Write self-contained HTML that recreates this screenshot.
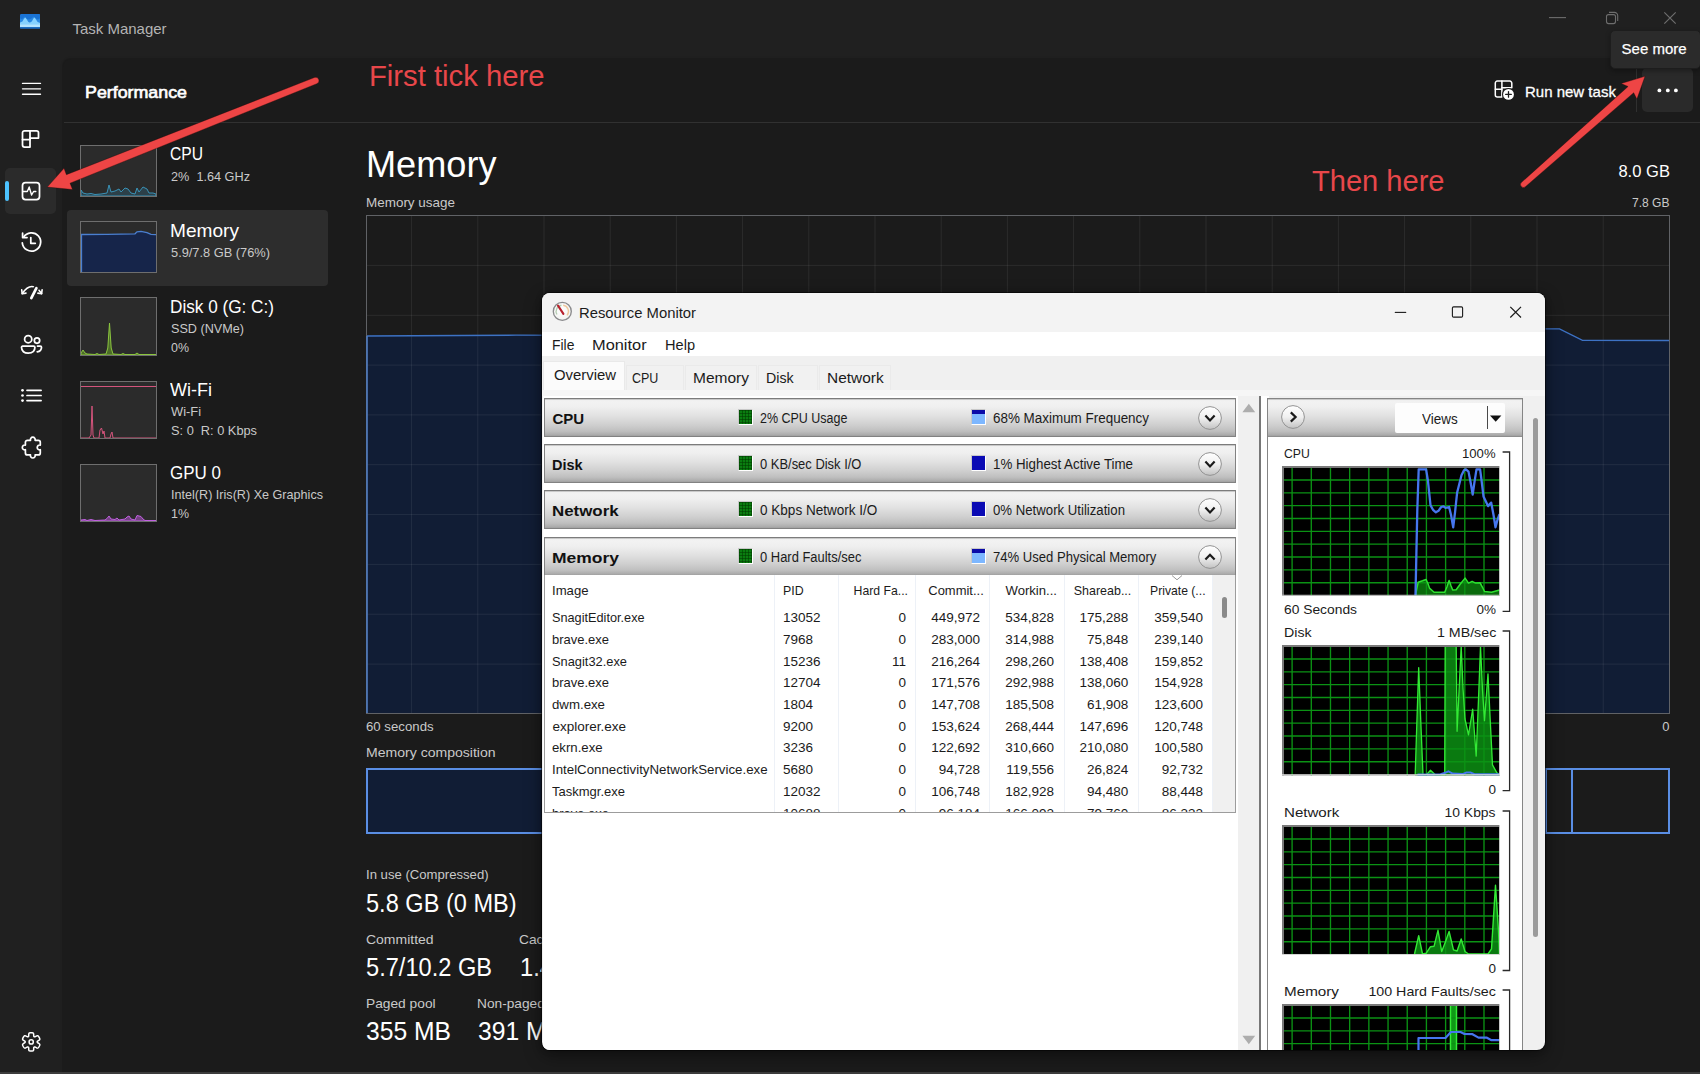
<!DOCTYPE html>
<html lang="en"><head><meta charset="utf-8"><title>Task Manager</title>
<style>
*{box-sizing:border-box;margin:0;padding:0}
html,body{width:1700px;height:1074px;overflow:hidden;background:#202020}
body{position:relative;font-family:"Liberation Sans",sans-serif;-webkit-font-smoothing:antialiased}
body div, body span.t, body svg{position:absolute}
.t{line-height:1;white-space:nowrap;display:inline-block}

</style></head>
<body>
<div style="left:63px;top:58.5px;width:1637px;height:1016px;background:#1b1b1b;border-top-left-radius:8px;box-shadow:-1px -1px 1.5px rgba(0,0,0,.18);"></div>
<div style="left:64px;top:122px;width:1636px;height:1px;background:#313131;"></div>
<div style="left:0px;top:1072px;width:1700px;height:2px;background:#3c3c3c;"></div>
<svg style="left:20px;top:14.3px" width="20.4" height="14.6" viewBox="0 0 20.4 14.6">
<rect x="0" y="0" width="20.4" height="14.6" rx="1.2" fill="#1a73d4"/>
<path d="M0 4.2 L2 5.2 L4.6 2.6 L6.6 4.8 L9 5.6 L11.4 4.4 L13.6 2.4 L15.8 4.6 L18 5.4 L20.4 4 V8 H0Z" fill="#2d8ee6" opacity=".8"/>
<path d="M0 8.6 L2.4 7.6 L4 4.8 L5.4 3.6 L6.8 5.4 L8.4 8 L10 8.6 L11.8 7.4 L13.4 4.6 L14.6 3.6 L16 5.6 L17.6 8 L20.4 8.8 V13 H0Z" fill="#86d2ff"/>
<path d="M0 10.6 H20.4 V13.2 H0Z" fill="#b4e4ff"/>
<path d="M0 13 H20.4 V13.4 A1.2 1.2 0 0 1 19.2 14.6 H1.2 A1.2 1.2 0 0 1 0 13.4Z" fill="#1d6fc4"/>
</svg>
<span class="t" id="t1" style="top:21.00px;font-size:15px;color:#b4b4b4;left:72.40px;transform-origin:0 50%;">Task Manager</span>
<svg style="left:1540px;top:8px" width="150" height="22" viewBox="0 0 150 22" fill="none" stroke="#6d6d6d" stroke-width="1.1">
<path d="M9 9.6 H26"/>
<rect x="66.5" y="6.6" width="9" height="9" rx="2"/>
<path d="M69 4.4 H74.5 A3.2 3.2 0 0 1 77.7 7.6 V13"/>
<path d="M124.3 4.3 L135.7 15.7 M135.7 4.3 L124.3 15.7" stroke-width="1.2"/>
</svg>
<svg style="left:21px;top:80px" width="22" height="18" viewBox="0 0 22 18" fill="none" stroke="#ffffff" stroke-width="1.75" stroke-linecap="round" stroke-linejoin="round"><path d="M1.5 3.4 H19.5 M1.5 8.8 H19.5 M1.5 14.2 H19.5" stroke-width="1.35"/></svg>
<svg style="left:21px;top:129px" width="20" height="20" viewBox="0 0 20 20" fill="none" stroke="#ffffff" stroke-width="1.75" stroke-linecap="round" stroke-linejoin="round">
<path d="M3.5 1.8 H9 V18 H3.5 A2 2 0 0 1 1.5 16 V3.8 A2 2 0 0 1 3.5 1.8Z"/>
<path d="M9 1.8 H15.5 A2 2 0 0 1 17.5 3.8 V9 H9"/><path d="M1.5 10.5 H9"/></svg>
<div style="left:5px;top:168px;width:51px;height:46px;background:#2b2b2b;border-radius:5px;"></div>
<div style="left:5px;top:181px;width:4px;height:20px;background:#4cc2ff;border-radius:2px;"></div>
<svg style="left:21px;top:181px" width="20" height="20" viewBox="0 0 20 20" fill="none" stroke="#ffffff" stroke-width="1.75" stroke-linecap="round" stroke-linejoin="round">
<rect x="1.5" y="1.5" width="17" height="17" rx="3"/>
<path d="M1.8 10.5 H6.3 L8.2 6 L10.6 14 L12.6 10.5 H14.8" stroke-width="1.4"/></svg>
<svg style="left:20px;top:231px" width="23" height="23" viewBox="0 0 23 23" fill="none" stroke="#ffffff" stroke-width="1.75" stroke-linecap="round" stroke-linejoin="round">
<path d="M3.6 6.2 A9.2 9.2 0 1 1 2.3 11.8"/><path d="M2.6 2.2 V6.6 H7"/><path d="M10.8 6.5 V12.3 H15.3"/></svg>
<svg style="left:20px;top:284px" width="24" height="18" viewBox="0 0 24 18" fill="none" stroke="#ffffff" stroke-width="1.75" stroke-linecap="round" stroke-linejoin="round">
<path d="M2.2 9.6 Q11.8 -4.6 21.6 9.6" stroke-width="1.7"/>
<path d="M1.7 5.9 L2.2 9.7 L6 9.1" stroke-width="1.6"/><path d="M17.8 9.1 L21.6 9.7 L22.1 5.9" stroke-width="1.6"/>
<path d="M16.4 4 L11.2 14.2" stroke="#202020" stroke-width="5.6"/>
<path d="M16.4 4.2 L11.3 14.1" stroke-width="2.7"/></svg>
<svg style="left:20px;top:334px" width="23" height="21" viewBox="0 0 23 21" fill="none" stroke="#ffffff" stroke-width="1.75" stroke-linecap="round" stroke-linejoin="round">
<circle cx="8.2" cy="5.2" r="3.6"/><circle cx="17" cy="6.6" r="2.7"/>
<path d="M2.6 12 H13.6 A1.3 1.3 0 0 1 14.9 13.3 C14.9 17.2 12 19.2 8.2 19.2 C4.4 19.2 1.5 17.2 1.5 13.3 A1.3 1.3 0 0 1 2.6 12Z"/>
<path d="M17.5 12 H20.2 A1.3 1.3 0 0 1 21.5 13.3 C21.5 16 19.8 17.6 17.2 17.8"/></svg>
<svg style="left:20px;top:386px" width="23" height="18" viewBox="0 0 23 18" fill="none" stroke="#ffffff" stroke-width="1.75" stroke-linecap="round" stroke-linejoin="round">
<path d="M7 4.3 H21.1 M7 9.5 H21.1 M7 14.6 H21.1" stroke-width="1.7"/>
<circle cx="2.5" cy="4.3" r="1.35" fill="#fff" stroke="none"/><circle cx="2.5" cy="9.5" r="1.35" fill="#fff" stroke="none"/><circle cx="2.5" cy="14.6" r="1.35" fill="#fff" stroke="none"/></svg>
<svg style="left:21px;top:436px" width="22" height="23" viewBox="0 0 22 23" fill="none" stroke="#ffffff" stroke-width="1.75" stroke-linecap="round" stroke-linejoin="round">
<path d="M6.4 4.3 H9.5 A2.4 2.4 0 1 1 14.1 4.3 H17.3 A2 2 0 0 1 19.3 6.3 V9.1 A2.4 2.4 0 1 0 19.3 13.7 V16.9 A2 2 0 0 1 17.3 18.9 H14.1 A2.4 2.4 0 1 1 9.5 18.9 H6.4 A2 2 0 0 1 4.4 16.9 V13.7 A2.4 2.4 0 1 1 4.4 9.1 V6.3 A2 2 0 0 1 6.4 4.3Z" stroke-width="1.7"/></svg>
<svg style="left:21px;top:1031px" width="21" height="22" viewBox="0 0 21 22" fill="none" stroke="#ffffff" stroke-width="1.75" stroke-linecap="round" stroke-linejoin="round">
<circle cx="10.2" cy="10.9" r="2.1" stroke-width="1.5"/>
<path d="M16.20 10.90 L16.23 10.64 L16.36 10.36 L16.68 10.05 L17.35 9.64 L18.19 9.13 L18.70 8.62 L18.83 8.18 L18.77 7.78 L18.64 7.40 L18.49 7.03 L18.32 6.68 L18.12 6.33 L17.92 5.98 L17.69 5.65 L17.45 5.34 L17.18 5.04 L16.87 4.79 L16.43 4.67 L15.73 4.86 L14.87 5.34 L14.18 5.71 L13.74 5.84 L13.44 5.81 L13.20 5.70 L12.99 5.55 L12.81 5.30 L12.70 4.86 L12.68 4.08 L12.66 3.09 L12.48 2.40 L12.16 2.07 L11.78 1.92 L11.39 1.84 L11.00 1.79 L10.60 1.76 L10.20 1.75 L9.80 1.76 L9.40 1.79 L9.01 1.84 L8.62 1.92 L8.24 2.07 L7.92 2.40 L7.74 3.09 L7.72 4.08 L7.70 4.86 L7.59 5.30 L7.41 5.55 L7.20 5.70 L6.96 5.81 L6.66 5.84 L6.22 5.71 L5.53 5.34 L4.67 4.86 L3.97 4.67 L3.53 4.79 L3.22 5.04 L2.95 5.34 L2.71 5.65 L2.48 5.98 L2.28 6.32 L2.08 6.68 L1.91 7.03 L1.76 7.40 L1.63 7.78 L1.57 8.18 L1.70 8.62 L2.21 9.13 L3.05 9.64 L3.72 10.05 L4.04 10.36 L4.17 10.64 L4.20 10.90 L4.17 11.16 L4.04 11.44 L3.72 11.75 L3.05 12.16 L2.21 12.67 L1.70 13.18 L1.57 13.62 L1.63 14.02 L1.76 14.40 L1.91 14.77 L2.08 15.12 L2.28 15.48 L2.48 15.82 L2.71 16.15 L2.95 16.46 L3.22 16.76 L3.53 17.01 L3.97 17.13 L4.67 16.94 L5.53 16.46 L6.22 16.09 L6.66 15.96 L6.96 15.99 L7.20 16.10 L7.41 16.25 L7.59 16.50 L7.70 16.94 L7.72 17.72 L7.74 18.71 L7.92 19.40 L8.24 19.73 L8.62 19.88 L9.01 19.96 L9.40 20.01 L9.80 20.04 L10.20 20.05 L10.60 20.04 L11.00 20.01 L11.39 19.96 L11.78 19.88 L12.16 19.73 L12.48 19.40 L12.66 18.71 L12.68 17.72 L12.70 16.94 L12.81 16.50 L12.99 16.25 L13.20 16.10 L13.44 15.99 L13.74 15.96 L14.18 16.09 L14.87 16.46 L15.73 16.94 L16.43 17.13 L16.87 17.01 L17.18 16.76 L17.45 16.46 L17.69 16.15 L17.92 15.82 L18.12 15.47 L18.32 15.12 L18.49 14.77 L18.64 14.40 L18.77 14.02 L18.83 13.62 L18.70 13.18 L18.19 12.67 L17.35 12.16 L16.68 11.75 L16.36 11.44 L16.23 11.16Z" stroke-width="1.5"/></svg>
<span class="t" id="t2" style="top:84.00px;font-size:17px;color:#ffffff;left:84.50px;transform-origin:0 50%;transform:scaleX(1.0480);-webkit-text-stroke:.65px #fff;">Performance</span>
<div style="left:67px;top:210px;width:261px;height:76px;background:#2d2d2d;border-radius:4px;"></div>
<div style="left:80px;top:145px;width:77px;height:52px;background:#2b2b2b;border:1px solid #6e6e6e;overflow:hidden;"><svg style="left:0;top:0" width="75" height="50" viewBox="0 0 75 50"><path d="M0 50 V44 L2 47 L6 48 L10 47.5 L14 48.5 L20 48 L26 47 L28 39 L30 46 L34 45 L38 43 L40 46 L44 42 L47 43 L50 47 L54 48 L56 42 L58 46 L62 41 L66 43 L68 47 L72 47 L75 48 V50Z" fill="rgba(50,140,180,.22)" stroke="#3b9cc4" stroke-width=".9"/></svg></div>
<span class="t" id="t3" style="top:145.25px;font-size:18.5px;color:#ffffff;left:170.00px;transform-origin:0 50%;transform:scaleX(0.8448);">CPU</span>
<span class="t" id="t4" style="top:169.75px;font-size:13.5px;color:#c9c9c9;left:171.00px;transform-origin:0 50%;transform:scaleX(0.9400);">2%  1.64 GHz</span>
<div style="left:80px;top:221px;width:77px;height:52px;background:#2b2b2b;border:1px solid #6e6e6e;overflow:hidden;"><svg style="left:0;top:0" width="75" height="50" viewBox="0 0 75 50"><path d="M0 50 V12.5 L26 12.3 L54 11.8 L56 9.8 L60 9.4 L66 10.6 L70 12.4 L75 12.6 V50Z" fill="#16254a"/><path d="M0.5 50 V12.5 L26 12.3 L54 11.8 L56 9.8 L60 9.4 L66 10.6 L70 12.4 L75 12.6" fill="none" stroke="#4a7fd0" stroke-width="1.3"/></svg></div>
<span class="t" id="t5" style="top:222.25px;font-size:18.5px;color:#ffffff;left:170.00px;transform-origin:0 50%;transform:scaleX(1.0327);">Memory</span>
<span class="t" id="t6" style="top:245.75px;font-size:13.5px;color:#c9c9c9;left:171.00px;transform-origin:0 50%;transform:scaleX(0.9491);">5.9/7.8 GB (76%)</span>
<div style="left:80px;top:297px;width:77px;height:59px;background:#2b2b2b;border:1px solid #6e6e6e;overflow:hidden;"><svg style="left:0;top:0" width="75" height="57" viewBox="0 0 75 57"><path d="M0 57 V55 L2 52 L4 55 L6 56 L14 56.5 L16 55.5 L18 56.5 L25 56 L26.8 50 L28.5 25 L30.2 50 L32 56 L40 56.5 L42 55.5 L44 56.5 L54 56.5 L56 55 L58 56.5 L75 56.5 V57Z" fill="rgba(120,190,40,.45)" stroke="#8bc53f" stroke-width="1"/></svg></div>
<span class="t" id="t7" style="top:298.25px;font-size:18.5px;color:#ffffff;left:170.00px;transform-origin:0 50%;transform:scaleX(0.9283);">Disk 0 (G: C:)</span>
<span class="t" id="t8" style="top:321.75px;font-size:13.5px;color:#c9c9c9;left:171.00px;transform-origin:0 50%;transform:scaleX(0.9357);">SSD (NVMe)</span>
<span class="t" id="t9" style="top:340.75px;font-size:13.5px;color:#c9c9c9;left:171.00px;transform-origin:0 50%;transform:scaleX(0.9223);">0%</span>
<div style="left:80px;top:381px;width:77px;height:58px;background:#2b2b2b;border:1px solid #6e6e6e;overflow:hidden;"><svg style="left:0;top:0" width="75" height="56" viewBox="0 0 75 56"><path d="M0 4.5 H75" stroke="#d4547c" stroke-width="1.2"/><path d="M0 56 H8 L10 53 L11 24 L12 53 L13 56 H18 L19 48 L20.5 46 L22 52 L23 49 L24 56 H29 L30 52 L31 50 L32 56 H75" fill="none" stroke="#d4547c" stroke-width="1"/></svg></div>
<span class="t" id="t10" style="top:381.25px;font-size:18.5px;color:#ffffff;left:170.00px;transform-origin:0 50%;transform:scaleX(0.9732);">Wi-Fi</span>
<span class="t" id="t11" style="top:404.75px;font-size:13.5px;color:#c9c9c9;left:171.00px;transform-origin:0 50%;transform:scaleX(0.9529);">Wi-Fi</span>
<span class="t" id="t12" style="top:423.75px;font-size:13.5px;color:#c9c9c9;left:171.00px;transform-origin:0 50%;transform:scaleX(0.9472);">S: 0  R: 0 Kbps</span>
<div style="left:80px;top:464px;width:77px;height:58px;background:#2b2b2b;border:1px solid #6e6e6e;overflow:hidden;"><svg style="left:0;top:0" width="75" height="56" viewBox="0 0 75 56"><path d="M0 56 V55 L4 54.5 L6 55.5 L10 54.5 L14 55.5 L24 55 L26 53.5 L28 51 L30 54 L34 54.5 L36 53 L38 55 L44 54 L46 52 L48 51 L50 54 L54 55 L56 50.5 L60 51.5 L62 54 L64 55.5 H75 V56Z" fill="rgba(190,90,220,.5)" stroke="#c060e0" stroke-width="1"/></svg></div>
<span class="t" id="t13" style="top:464.25px;font-size:18.5px;color:#ffffff;left:170.00px;transform-origin:0 50%;transform:scaleX(0.9184);">GPU 0</span>
<span class="t" id="t14" style="top:487.75px;font-size:13.5px;color:#c9c9c9;left:171.00px;transform-origin:0 50%;transform:scaleX(0.9338);">Intel(R) Iris(R) Xe Graphics</span>
<span class="t" id="t15" style="top:506.75px;font-size:13.5px;color:#c9c9c9;left:171.00px;transform-origin:0 50%;transform:scaleX(0.9223);">1%</span>
<svg style="left:1493px;top:80px" width="23" height="22" viewBox="0 0 23 22" fill="none" stroke="#ffffff" stroke-width="1.4" stroke-linecap="round" stroke-linejoin="round">
<path d="M4.3 1.1 H8.9 V17.1 H4.3 A2 2 0 0 1 2.3 15.1 V3.1 A2 2 0 0 1 4.3 1.1Z" stroke-width="1.5"/>
<path d="M8.9 1.1 H16.8 A2 2 0 0 1 18.8 3.1 V7.7 H8.9" stroke-width="1.5"/><path d="M2.3 9.2 H8.9" stroke-width="1.5"/>
<circle cx="15.5" cy="14.4" r="6.5" fill="#1b1b1b" stroke="none"/>
<circle cx="15.5" cy="14.4" r="5.4" fill="#fff" stroke="none"/>
<path d="M15.5 11.6 V17.2 M12.7 14.4 H18.3" stroke="#1b1b1b" stroke-width="1.3"/></svg>
<span class="t" id="t16" style="top:84.00px;font-size:15px;color:#ffffff;left:1525.00px;transform-origin:0 50%;-webkit-text-stroke:.3px #fff;">Run new task</span>
<div style="left:1636px;top:68px;width:1px;height:44px;background:#303030;"></div>
<div style="left:1642px;top:68px;width:51px;height:44px;background:#2a2a2a;border-radius:5px;"></div>
<svg style="left:1655px;top:87px" width="26" height="7" viewBox="0 0 26 7" fill="#fff"><circle cx="4.4" cy="3.4" r="1.9"/><circle cx="12.8" cy="3.4" r="1.9"/><circle cx="20.9" cy="3.4" r="1.9"/></svg>
<div style="left:1609.5px;top:29.5px;width:91px;height:39.5px;background:#2b2b2b;border:1px solid #1d1d1d;border-radius:5px;box-shadow:0 2px 5px rgba(0,0,0,.3);"></div>
<span class="t" id="t17" style="top:41.00px;font-size:15px;color:#ffffff;left:1621.60px;transform-origin:0 50%;-webkit-text-stroke:.25px #fff;">See more</span>
<span class="t" id="t18" style="top:146.50px;font-size:36px;color:#ffffff;left:365.60px;transform-origin:0 50%;transform:scaleX(1.0037);">Memory</span>
<span class="t" id="t19" style="top:196.00px;font-size:13px;color:#c9c9c9;left:366.40px;transform-origin:0 50%;transform:scaleX(1.0351);">Memory usage</span>
<span class="t" id="t20" style="top:163.00px;font-size:17px;color:#ffffff;right:30.50px;transform-origin:100% 50%;transform:scaleX(0.9731);">8.0 GB</span>
<span class="t" id="t21" style="top:196.00px;font-size:13px;color:#c9c9c9;right:30.50px;transform-origin:100% 50%;transform:scaleX(0.9266);">7.8 GB</span>
<svg style="left:366px;top:215px" width="1304" height="499" viewBox="0 0 1304 499">
<rect x="0" y="0" width="1304" height="499" fill="#1b1b1b"/>
<path d="M0 499 V121 L150 120.2 L300 120.6 L420 121.2 L1080 121 L1130 113.8 L1193.5 113.8 L1216.5 125.3 L1304 125.5 V499Z" fill="#111d35"/>
<g stroke="#ffffff" stroke-opacity=".075" stroke-width="1" fill="none"><path d="M1237.2 0 V499"/><path d="M1171.0 0 V499"/><path d="M1104.8 0 V499"/><path d="M1038.6 0 V499"/><path d="M972.4 0 V499"/><path d="M906.2 0 V499"/><path d="M840.0 0 V499"/><path d="M773.8 0 V499"/><path d="M707.6 0 V499"/><path d="M641.4 0 V499"/><path d="M575.2 0 V499"/><path d="M509.0 0 V499"/><path d="M442.8 0 V499"/><path d="M376.6 0 V499"/><path d="M310.4 0 V499"/><path d="M244.2 0 V499"/><path d="M178.0 0 V499"/><path d="M111.8 0 V499"/><path d="M45.6 0 V499"/><path d="M0 50.4 H1304"/><path d="M0 100.3 H1304"/><path d="M0 150.1 H1304"/><path d="M0 199.9 H1304"/><path d="M0 249.7 H1304"/><path d="M0 299.6 H1304"/><path d="M0 349.4 H1304"/><path d="M0 399.2 H1304"/><path d="M0 449.1 H1304"/></g>
<path d="M0 121 L150 120.2 L300 120.6 L420 121.2 L1080 121 L1130 113.8 L1193.5 113.8 L1216.5 125.3 L1304 125.5" fill="none" stroke="#3d72c4" stroke-width="1.3"/>
<rect x="0.5" y="0.5" width="1303" height="498" fill="none" stroke="#606266"/>
<path d="M1 121 V498" fill="none" stroke="#4f79ba" stroke-width="1.7"/>
</svg>
<span class="t" id="t22" style="top:720.00px;font-size:13px;color:#c9c9c9;left:366.40px;transform-origin:0 50%;transform:scaleX(1.0165);">60 seconds</span>
<span class="t" id="t23" style="top:720.00px;font-size:13px;color:#c9c9c9;right:30.50px;transform-origin:100% 50%;">0</span>
<span class="t" id="t24" style="top:746.00px;font-size:13px;color:#c9c9c9;left:366.40px;transform-origin:0 50%;transform:scaleX(1.0806);">Memory composition</span>
<div style="left:366px;top:767.7px;width:1304px;height:66.3px;background:#111d35;border:2px solid #5a8ee4;"></div>
<div style="left:1545px;top:768px;width:2px;height:66px;background:#5a8ee4;"></div>
<div style="left:1547px;top:769.7px;width:121px;height:62.3px;background:#1b1b1b;"></div>
<div style="left:1571px;top:768px;width:2px;height:66px;background:#5a8ee4;"></div>
<span class="t" id="t25" style="top:868.00px;font-size:13px;color:#c9c9c9;left:366.40px;transform-origin:0 50%;transform:scaleX(1.0100);">In use (Compressed)</span>
<span class="t" id="t26" style="top:890.50px;font-size:25px;color:#ffffff;left:366.40px;transform-origin:0 50%;transform:scaleX(0.9426);">5.8 GB (0 MB)</span>
<span class="t" id="t27" style="top:933.00px;font-size:13px;color:#c9c9c9;left:366.40px;transform-origin:0 50%;transform:scaleX(1.0754);">Committed</span>
<span class="t" id="t28" style="top:933.00px;font-size:13px;color:#c9c9c9;left:518.60px;transform-origin:0 50%;transform:scaleX(1.0600);">Cached</span>
<span class="t" id="t29" style="top:954.50px;font-size:25px;color:#ffffff;left:366.40px;transform-origin:0 50%;transform:scaleX(0.9443);">5.7/10.2 GB</span>
<span class="t" id="t30" style="top:954.50px;font-size:25px;color:#ffffff;left:519.50px;transform-origin:0 50%;transform:scaleX(0.9508);">1.4 GB</span>
<span class="t" id="t31" style="top:997.00px;font-size:13px;color:#c9c9c9;left:366.40px;transform-origin:0 50%;transform:scaleX(1.0581);">Paged pool</span>
<span class="t" id="t32" style="top:997.00px;font-size:13px;color:#c9c9c9;left:477.20px;transform-origin:0 50%;transform:scaleX(1.0548);">Non-paged pool</span>
<span class="t" id="t33" style="top:1018.50px;font-size:25px;color:#ffffff;left:366.40px;transform-origin:0 50%;transform:scaleX(0.9864);">355 MB</span>
<span class="t" id="t34" style="top:1018.50px;font-size:25px;color:#ffffff;left:477.60px;transform-origin:0 50%;transform:scaleX(0.9864);">391 MB</span>
<span class="t" id="t35" style="top:60.50px;font-size:30px;color:#e8474a;left:368.60px;transform-origin:0 50%;transform:scaleX(0.9743);">First tick here</span>
<span class="t" id="t36" style="top:165.50px;font-size:30px;color:#e8474a;left:1311.50px;transform-origin:0 50%;transform:scaleX(0.9688);">Then here</span>
<div style="left:542px;top:293px;width:1003px;height:757px;background:#f0f0f0;border-radius:8px;box-shadow:0 0 0 1px rgba(0,0,0,.5),0 6px 18px rgba(0,0,0,.4),0 0 6px rgba(0,0,0,.25);overflow:hidden;"><div style="left:0;top:0;width:1003px;height:38.6px;background:#f3f3f3"></div><div style="left:0;top:38.6px;width:1003px;height:24.3px;background:#ffffff"></div><div style="left:1px;top:68px;width:82px;height:30px;background:#fbfbfb;border:1px solid #e9e9e9;border-bottom:none"></div><div style="left:84px;top:72px;width:58px;height:25px;border:1px solid #eaeaea;border-bottom:none;background:#f1f1f1"></div><div style="left:143px;top:72px;width:72px;height:25px;border:1px solid #eaeaea;border-bottom:none;background:#f1f1f1"></div><div style="left:216px;top:72px;width:60px;height:25px;border:1px solid #eaeaea;border-bottom:none;background:#f1f1f1"></div><div style="left:277px;top:72px;width:72px;height:25px;border:1px solid #eaeaea;border-bottom:none;background:#f1f1f1"></div><div style="left:0;top:97px;width:1003px;height:6px;background:#f6f6f6"></div><div style="left:1px;top:102.5px;width:695.4px;height:655px;background:#ffffff"></div><div style="left:718.6px;top:102.5px;width:8px;height:655px;background:#ffffff"></div><div style="left:716.8px;top:103px;width:2px;height:654px;background:#777777"></div></div>
<svg style="left:552px;top:301px" width="21" height="21" viewBox="0 0 21 21">
<defs><radialGradient id="rmg" cx=".45" cy=".4" r=".7"><stop offset="0" stop-color="#ffffff"/><stop offset=".75" stop-color="#f4f4f2"/><stop offset="1" stop-color="#d9d9d9"/></radialGradient></defs>
<circle cx="10.3" cy="10.4" r="9" fill="url(#rmg)" stroke="#8b8b8d" stroke-width="1.35"/>
<path d="M4.93 13.50 A6.2 6.2 0 0 1 9.44 4.26" fill="none" stroke="#a8c6a6" stroke-width="1.3" opacity=".85"/>
<path d="M11.16 4.26 A6.2 6.2 0 0 1 15.05 14.39" fill="none" stroke="#efc08c" stroke-width="1.3" opacity=".85"/>
<path d="M6 4.7 L11.4 12.9" stroke="#b8212d" stroke-width="2.1" stroke-linecap="round"/>
</svg>
<span class="t" id="t37" style="top:305.00px;font-size:15px;color:#1b1b1b;left:578.60px;transform-origin:0 50%;transform:scaleX(0.9883);">Resource Monitor</span>
<svg style="left:1390px;top:300px" width="140" height="24" viewBox="0 0 140 24" fill="none" stroke="#1a1a1a" stroke-width="1.1">
<path d="M4.8 12.4 H16.2"/>
<rect x="62.4" y="6.9" width="10.2" height="10.2" rx="1.2"/>
<path d="M120.3 6.8 L131 17.5 M131 6.8 L120.3 17.5" stroke-width="1.2"/>
</svg>
<span class="t" id="t38" style="top:337.00px;font-size:15px;color:#1b1b1b;left:551.60px;transform-origin:0 50%;transform:scaleX(0.9267);">File</span>
<span class="t" id="t39" style="top:337.00px;font-size:15px;color:#1b1b1b;left:592.40px;transform-origin:0 50%;transform:scaleX(1.0913);">Monitor</span>
<span class="t" id="t40" style="top:337.00px;font-size:15px;color:#1b1b1b;left:665.40px;transform-origin:0 50%;transform:scaleX(0.9722);">Help</span>
<span class="t" id="t41" style="top:367.00px;font-size:15px;color:#1b1b1b;left:553.60px;transform-origin:0 50%;transform:scaleX(0.9918);">Overview</span>
<span class="t" id="t42" style="top:370.00px;font-size:15px;color:#1b1b1b;left:631.60px;transform-origin:0 50%;transform:scaleX(0.8335);">CPU</span>
<span class="t" id="t43" style="top:370.00px;font-size:15px;color:#1b1b1b;left:693.00px;transform-origin:0 50%;transform:scaleX(1.0337);">Memory</span>
<span class="t" id="t44" style="top:370.00px;font-size:15px;color:#1b1b1b;left:766.00px;transform-origin:0 50%;transform:scaleX(0.9461);">Disk</span>
<span class="t" id="t45" style="top:370.00px;font-size:15px;color:#1b1b1b;left:827.40px;transform-origin:0 50%;transform:scaleX(1.0288);">Network</span>
<div style="left:543.5px;top:398px;width:692px;height:38.6px;background:linear-gradient(#eeeeee 0%,#f2f2f2 8%,#efefef 22%,#e1e1e1 46%,#cfcfcf 70%,#bfbfbf 87%,#adadad 96%,#a0a0a0 100%);border:1.5px solid #828282;border-top-color:#7c7c7c;box-shadow:inset 0 1px 0 rgba(170,170,170,.55);"></div>
<span class="t" id="t46" style="top:411.00px;font-size:15px;color:#111;font-weight:700;left:552.40px;transform-origin:0 50%;">CPU</span>
<div style="left:737.5px;top:409px;width:15px;height:16px;border:1px solid #fff;border-left-color:#c8c8c8;border-top-color:#c8c8c8;"><div style="left:0;top:0;width:13px;height:14px;background:#0a7d10;background-image:linear-gradient(90deg,rgba(0,60,0,.55) 1px,transparent 1px),linear-gradient(rgba(0,60,0,.55) 1px,transparent 1px);background-size:3px 3px"></div></div>
<span class="t" id="t47" style="top:411.00px;font-size:14px;color:#1b1b1b;left:759.60px;transform-origin:0 50%;transform:scaleX(0.8914);">2% CPU Usage</span>
<div style="left:971px;top:409px;width:15px;height:16px;border:1px solid #fff;border-left-color:#c8c8c8;border-top-color:#c8c8c8;"><div style="left:0;top:0;width:13px;height:14px;background:#7db7ff"></div><div style="left:0;top:0;width:13px;height:4px;background:#0a0aa8"></div></div>
<span class="t" id="t48" style="top:411.00px;font-size:14px;color:#1b1b1b;left:993.00px;transform-origin:0 50%;transform:scaleX(0.9593);">68% Maximum Frequency</span>
<svg style="left:1196.5px;top:404.5px" width="26" height="26" viewBox="-13 -13 26 26">
<defs><linearGradient id="cb417" x1="0" y1="0" x2="0" y2="1"><stop offset="0" stop-color="#ffffff"/><stop offset=".5" stop-color="#f0f0f0"/><stop offset="1" stop-color="#c2c2c2"/></linearGradient></defs>
<circle r="11.4" fill="url(#cb417)" stroke="#939393" stroke-width="1"/>
<path d="M-4.6 -2.4 L0 2.4 L4.6 -2.4" fill="none" stroke="#1a1a1a" stroke-width="2.2"/></svg>
<div style="left:543.5px;top:444px;width:692px;height:38.6px;background:linear-gradient(#eeeeee 0%,#f2f2f2 8%,#efefef 22%,#e1e1e1 46%,#cfcfcf 70%,#bfbfbf 87%,#adadad 96%,#a0a0a0 100%);border:1.5px solid #828282;border-top-color:#7c7c7c;box-shadow:inset 0 1px 0 rgba(170,170,170,.55);"></div>
<span class="t" id="t49" style="top:457.00px;font-size:15px;color:#111;font-weight:700;left:552.40px;transform-origin:0 50%;transform:scaleX(0.9657);">Disk</span>
<div style="left:737.5px;top:455px;width:15px;height:16px;border:1px solid #fff;border-left-color:#c8c8c8;border-top-color:#c8c8c8;"><div style="left:0;top:0;width:13px;height:14px;background:#0a7d10;background-image:linear-gradient(90deg,rgba(0,60,0,.55) 1px,transparent 1px),linear-gradient(rgba(0,60,0,.55) 1px,transparent 1px);background-size:3px 3px"></div></div>
<span class="t" id="t50" style="top:457.00px;font-size:14px;color:#1b1b1b;left:759.60px;transform-origin:0 50%;transform:scaleX(0.9243);">0 KB/sec Disk I/O</span>
<div style="left:971px;top:455px;width:15px;height:16px;border:1px solid #fff;border-left-color:#c8c8c8;border-top-color:#c8c8c8;"><div style="left:0;top:0;width:13px;height:14px;background:#0a0ab4"></div></div>
<span class="t" id="t51" style="top:457.00px;font-size:14px;color:#1b1b1b;left:993.00px;transform-origin:0 50%;transform:scaleX(0.9520);">1% Highest Active Time</span>
<svg style="left:1196.5px;top:450.5px" width="26" height="26" viewBox="-13 -13 26 26">
<defs><linearGradient id="cb463" x1="0" y1="0" x2="0" y2="1"><stop offset="0" stop-color="#ffffff"/><stop offset=".5" stop-color="#f0f0f0"/><stop offset="1" stop-color="#c2c2c2"/></linearGradient></defs>
<circle r="11.4" fill="url(#cb463)" stroke="#939393" stroke-width="1"/>
<path d="M-4.6 -2.4 L0 2.4 L4.6 -2.4" fill="none" stroke="#1a1a1a" stroke-width="2.2"/></svg>
<div style="left:543.5px;top:490px;width:692px;height:38.6px;background:linear-gradient(#eeeeee 0%,#f2f2f2 8%,#efefef 22%,#e1e1e1 46%,#cfcfcf 70%,#bfbfbf 87%,#adadad 96%,#a0a0a0 100%);border:1.5px solid #828282;border-top-color:#7c7c7c;box-shadow:inset 0 1px 0 rgba(170,170,170,.55);"></div>
<span class="t" id="t52" style="top:503.00px;font-size:15px;color:#111;font-weight:700;left:552.40px;transform-origin:0 50%;transform:scaleX(1.1252);">Network</span>
<div style="left:737.5px;top:501px;width:15px;height:16px;border:1px solid #fff;border-left-color:#c8c8c8;border-top-color:#c8c8c8;"><div style="left:0;top:0;width:13px;height:14px;background:#0a7d10;background-image:linear-gradient(90deg,rgba(0,60,0,.55) 1px,transparent 1px),linear-gradient(rgba(0,60,0,.55) 1px,transparent 1px);background-size:3px 3px"></div></div>
<span class="t" id="t53" style="top:503.00px;font-size:14px;color:#1b1b1b;left:759.60px;transform-origin:0 50%;transform:scaleX(0.9671);">0 Kbps Network I/O</span>
<div style="left:971px;top:501px;width:15px;height:16px;border:1px solid #fff;border-left-color:#c8c8c8;border-top-color:#c8c8c8;"><div style="left:0;top:0;width:13px;height:14px;background:#0a0ab4"></div></div>
<span class="t" id="t54" style="top:503.00px;font-size:14px;color:#1b1b1b;left:993.00px;transform-origin:0 50%;transform:scaleX(0.9424);">0% Network Utilization</span>
<svg style="left:1196.5px;top:496.5px" width="26" height="26" viewBox="-13 -13 26 26">
<defs><linearGradient id="cb509" x1="0" y1="0" x2="0" y2="1"><stop offset="0" stop-color="#ffffff"/><stop offset=".5" stop-color="#f0f0f0"/><stop offset="1" stop-color="#c2c2c2"/></linearGradient></defs>
<circle r="11.4" fill="url(#cb509)" stroke="#939393" stroke-width="1"/>
<path d="M-4.6 -2.4 L0 2.4 L4.6 -2.4" fill="none" stroke="#1a1a1a" stroke-width="2.2"/></svg>
<div style="left:543.5px;top:537px;width:692px;height:38.6px;background:linear-gradient(#eeeeee 0%,#f2f2f2 8%,#efefef 22%,#e1e1e1 46%,#cfcfcf 70%,#bfbfbf 87%,#adadad 96%,#a0a0a0 100%);border:1.5px solid #828282;border-top-color:#7c7c7c;box-shadow:inset 0 1px 0 rgba(170,170,170,.55);"></div>
<span class="t" id="t55" style="top:550.00px;font-size:15px;color:#111;font-weight:700;left:552.40px;transform-origin:0 50%;transform:scaleX(1.1646);">Memory</span>
<div style="left:737.5px;top:548px;width:15px;height:16px;border:1px solid #fff;border-left-color:#c8c8c8;border-top-color:#c8c8c8;"><div style="left:0;top:0;width:13px;height:14px;background:#0a7d10;background-image:linear-gradient(90deg,rgba(0,60,0,.55) 1px,transparent 1px),linear-gradient(rgba(0,60,0,.55) 1px,transparent 1px);background-size:3px 3px"></div></div>
<span class="t" id="t56" style="top:550.00px;font-size:14px;color:#1b1b1b;left:759.60px;transform-origin:0 50%;transform:scaleX(0.9242);">0 Hard Faults/sec</span>
<div style="left:971px;top:548px;width:15px;height:16px;border:1px solid #fff;border-left-color:#c8c8c8;border-top-color:#c8c8c8;"><div style="left:0;top:0;width:13px;height:14px;background:#7db7ff"></div><div style="left:0;top:0;width:13px;height:4px;background:#0a0aa8"></div></div>
<span class="t" id="t57" style="top:550.00px;font-size:14px;color:#1b1b1b;left:993.00px;transform-origin:0 50%;transform:scaleX(0.9334);">74% Used Physical Memory</span>
<svg style="left:1196.5px;top:543.5px" width="26" height="26" viewBox="-13 -13 26 26">
<defs><linearGradient id="cb556" x1="0" y1="0" x2="0" y2="1"><stop offset="0" stop-color="#ffffff"/><stop offset=".5" stop-color="#f0f0f0"/><stop offset="1" stop-color="#c2c2c2"/></linearGradient></defs>
<circle r="11.4" fill="url(#cb556)" stroke="#939393" stroke-width="1"/>
<path d="M-4.6 2.6 L0 -2.2 L4.6 2.6" fill="none" stroke="#1a1a1a" stroke-width="2.2"/></svg>
<div style="left:543.5px;top:574.5px;width:692px;height:238px;border:1px solid #9c9c9c;border-top:none;background:#fff;overflow:hidden;"><div style="left:668px;top:0;width:24px;height:238px;background:#f0f0f0"></div><div style="left:229.5px;top:0;width:1px;height:238px;background:#edf1f7"></div><div style="left:293.1px;top:0;width:1px;height:238px;background:#edf1f7"></div><div style="left:370.7px;top:0;width:1px;height:238px;background:#edf1f7"></div><div style="left:444.9px;top:0;width:1px;height:238px;background:#edf1f7"></div><div style="left:519.0px;top:0;width:1px;height:238px;background:#edf1f7"></div><div style="left:593.3px;top:0;width:1px;height:238px;background:#edf1f7"></div><div style="left:667.2px;top:0;width:1px;height:238px;background:#edf1f7"></div><div style="left:677px;top:22.5px;width:5px;height:21px;background:#8a8a8a;border-radius:2.5px"></div></div>
<svg style="left:1170px;top:575px" width="14" height="6" viewBox="0 0 14 6"><path d="M2 0.5 L7 4.8 L12 0.5" fill="none" stroke="#9a9a9a" stroke-width="1"/></svg>
<span class="t" id="t58" style="top:583.75px;font-size:13.5px;color:#1b1b1b;left:552.40px;transform-origin:0 50%;transform:scaleX(0.9752);">Image</span>
<span class="t" id="t59" style="top:583.75px;font-size:13.5px;color:#1b1b1b;left:783.00px;transform-origin:0 50%;transform:scaleX(0.9149);">PID</span>
<span class="t" id="t60" style="top:583.75px;font-size:13.5px;color:#1b1b1b;right:791.50px;transform-origin:100% 50%;transform:scaleX(0.9079);">Hard Fa...</span>
<span class="t" id="t61" style="top:583.75px;font-size:13.5px;color:#1b1b1b;right:716.50px;transform-origin:100% 50%;transform:scaleX(0.9608);">Commit...</span>
<span class="t" id="t62" style="top:583.75px;font-size:13.5px;color:#1b1b1b;right:642.50px;transform-origin:100% 50%;transform:scaleX(0.9714);">Workin...</span>
<span class="t" id="t63" style="top:583.75px;font-size:13.5px;color:#1b1b1b;right:568.50px;transform-origin:100% 50%;transform:scaleX(0.9230);">Shareab...</span>
<span class="t" id="t64" style="top:583.75px;font-size:13.5px;color:#1b1b1b;right:494.50px;transform-origin:100% 50%;transform:scaleX(0.9022);">Private (...</span>
<span class="t" id="t65" style="top:610.75px;font-size:13.5px;color:#1b1b1b;left:552.40px;transform-origin:0 50%;transform:scaleX(0.9417);">SnagitEditor.exe</span>
<span class="t" id="t66" style="top:610.75px;font-size:13.5px;color:#1b1b1b;left:783.00px;transform-origin:0 50%;">13052</span>
<span class="t" id="t67" style="top:610.75px;font-size:13.5px;color:#1b1b1b;right:794.00px;transform-origin:100% 50%;">0</span>
<span class="t" id="t68" style="top:610.75px;font-size:13.5px;color:#1b1b1b;right:720.00px;transform-origin:100% 50%;">449,972</span>
<span class="t" id="t69" style="top:610.75px;font-size:13.5px;color:#1b1b1b;right:646.00px;transform-origin:100% 50%;">534,828</span>
<span class="t" id="t70" style="top:610.75px;font-size:13.5px;color:#1b1b1b;right:571.80px;transform-origin:100% 50%;">175,288</span>
<span class="t" id="t71" style="top:610.75px;font-size:13.5px;color:#1b1b1b;right:497.00px;transform-origin:100% 50%;">359,540</span>
<span class="t" id="t72" style="top:632.75px;font-size:13.5px;color:#1b1b1b;left:552.40px;transform-origin:0 50%;transform:scaleX(0.9613);">brave.exe</span>
<span class="t" id="t73" style="top:632.75px;font-size:13.5px;color:#1b1b1b;left:783.00px;transform-origin:0 50%;">7968</span>
<span class="t" id="t74" style="top:632.75px;font-size:13.5px;color:#1b1b1b;right:794.00px;transform-origin:100% 50%;">0</span>
<span class="t" id="t75" style="top:632.75px;font-size:13.5px;color:#1b1b1b;right:720.00px;transform-origin:100% 50%;">283,000</span>
<span class="t" id="t76" style="top:632.75px;font-size:13.5px;color:#1b1b1b;right:646.00px;transform-origin:100% 50%;">314,988</span>
<span class="t" id="t77" style="top:632.75px;font-size:13.5px;color:#1b1b1b;right:571.80px;transform-origin:100% 50%;">75,848</span>
<span class="t" id="t78" style="top:632.75px;font-size:13.5px;color:#1b1b1b;right:497.00px;transform-origin:100% 50%;">239,140</span>
<span class="t" id="t79" style="top:654.75px;font-size:13.5px;color:#1b1b1b;left:552.40px;transform-origin:0 50%;transform:scaleX(0.9516);">Snagit32.exe</span>
<span class="t" id="t80" style="top:654.75px;font-size:13.5px;color:#1b1b1b;left:783.00px;transform-origin:0 50%;">15236</span>
<span class="t" id="t81" style="top:654.75px;font-size:13.5px;color:#1b1b1b;right:794.00px;transform-origin:100% 50%;">11</span>
<span class="t" id="t82" style="top:654.75px;font-size:13.5px;color:#1b1b1b;right:720.00px;transform-origin:100% 50%;">216,264</span>
<span class="t" id="t83" style="top:654.75px;font-size:13.5px;color:#1b1b1b;right:646.00px;transform-origin:100% 50%;">298,260</span>
<span class="t" id="t84" style="top:654.75px;font-size:13.5px;color:#1b1b1b;right:571.80px;transform-origin:100% 50%;">138,408</span>
<span class="t" id="t85" style="top:654.75px;font-size:13.5px;color:#1b1b1b;right:497.00px;transform-origin:100% 50%;">159,852</span>
<span class="t" id="t86" style="top:675.75px;font-size:13.5px;color:#1b1b1b;left:552.40px;transform-origin:0 50%;transform:scaleX(0.9613);">brave.exe</span>
<span class="t" id="t87" style="top:675.75px;font-size:13.5px;color:#1b1b1b;left:783.00px;transform-origin:0 50%;">12704</span>
<span class="t" id="t88" style="top:675.75px;font-size:13.5px;color:#1b1b1b;right:794.00px;transform-origin:100% 50%;">0</span>
<span class="t" id="t89" style="top:675.75px;font-size:13.5px;color:#1b1b1b;right:720.00px;transform-origin:100% 50%;">171,576</span>
<span class="t" id="t90" style="top:675.75px;font-size:13.5px;color:#1b1b1b;right:646.00px;transform-origin:100% 50%;">292,988</span>
<span class="t" id="t91" style="top:675.75px;font-size:13.5px;color:#1b1b1b;right:571.80px;transform-origin:100% 50%;">138,060</span>
<span class="t" id="t92" style="top:675.75px;font-size:13.5px;color:#1b1b1b;right:497.00px;transform-origin:100% 50%;">154,928</span>
<span class="t" id="t93" style="top:697.75px;font-size:13.5px;color:#1b1b1b;left:552.40px;transform-origin:0 50%;transform:scaleX(0.9809);">dwm.exe</span>
<span class="t" id="t94" style="top:697.75px;font-size:13.5px;color:#1b1b1b;left:783.00px;transform-origin:0 50%;">1804</span>
<span class="t" id="t95" style="top:697.75px;font-size:13.5px;color:#1b1b1b;right:794.00px;transform-origin:100% 50%;">0</span>
<span class="t" id="t96" style="top:697.75px;font-size:13.5px;color:#1b1b1b;right:720.00px;transform-origin:100% 50%;">147,708</span>
<span class="t" id="t97" style="top:697.75px;font-size:13.5px;color:#1b1b1b;right:646.00px;transform-origin:100% 50%;">185,508</span>
<span class="t" id="t98" style="top:697.75px;font-size:13.5px;color:#1b1b1b;right:571.80px;transform-origin:100% 50%;">61,908</span>
<span class="t" id="t99" style="top:697.75px;font-size:13.5px;color:#1b1b1b;right:497.00px;transform-origin:100% 50%;">123,600</span>
<span class="t" id="t100" style="top:719.75px;font-size:13.5px;color:#1b1b1b;left:552.40px;transform-origin:0 50%;">explorer.exe</span>
<span class="t" id="t101" style="top:719.75px;font-size:13.5px;color:#1b1b1b;left:783.00px;transform-origin:0 50%;">9200</span>
<span class="t" id="t102" style="top:719.75px;font-size:13.5px;color:#1b1b1b;right:794.00px;transform-origin:100% 50%;">0</span>
<span class="t" id="t103" style="top:719.75px;font-size:13.5px;color:#1b1b1b;right:720.00px;transform-origin:100% 50%;">153,624</span>
<span class="t" id="t104" style="top:719.75px;font-size:13.5px;color:#1b1b1b;right:646.00px;transform-origin:100% 50%;">268,444</span>
<span class="t" id="t105" style="top:719.75px;font-size:13.5px;color:#1b1b1b;right:571.80px;transform-origin:100% 50%;">147,696</span>
<span class="t" id="t106" style="top:719.75px;font-size:13.5px;color:#1b1b1b;right:497.00px;transform-origin:100% 50%;">120,748</span>
<span class="t" id="t107" style="top:740.75px;font-size:13.5px;color:#1b1b1b;left:552.40px;transform-origin:0 50%;transform:scaleX(0.9772);">ekrn.exe</span>
<span class="t" id="t108" style="top:740.75px;font-size:13.5px;color:#1b1b1b;left:783.00px;transform-origin:0 50%;">3236</span>
<span class="t" id="t109" style="top:740.75px;font-size:13.5px;color:#1b1b1b;right:794.00px;transform-origin:100% 50%;">0</span>
<span class="t" id="t110" style="top:740.75px;font-size:13.5px;color:#1b1b1b;right:720.00px;transform-origin:100% 50%;">122,692</span>
<span class="t" id="t111" style="top:740.75px;font-size:13.5px;color:#1b1b1b;right:646.00px;transform-origin:100% 50%;">310,660</span>
<span class="t" id="t112" style="top:740.75px;font-size:13.5px;color:#1b1b1b;right:571.80px;transform-origin:100% 50%;">210,080</span>
<span class="t" id="t113" style="top:740.75px;font-size:13.5px;color:#1b1b1b;right:497.00px;transform-origin:100% 50%;">100,580</span>
<span class="t" id="t114" style="top:762.75px;font-size:13.5px;color:#1b1b1b;left:552.40px;transform-origin:0 50%;transform:scaleX(0.9841);">IntelConnectivityNetworkService.exe</span>
<span class="t" id="t115" style="top:762.75px;font-size:13.5px;color:#1b1b1b;left:783.00px;transform-origin:0 50%;">5680</span>
<span class="t" id="t116" style="top:762.75px;font-size:13.5px;color:#1b1b1b;right:794.00px;transform-origin:100% 50%;">0</span>
<span class="t" id="t117" style="top:762.75px;font-size:13.5px;color:#1b1b1b;right:720.00px;transform-origin:100% 50%;">94,728</span>
<span class="t" id="t118" style="top:762.75px;font-size:13.5px;color:#1b1b1b;right:646.00px;transform-origin:100% 50%;">119,556</span>
<span class="t" id="t119" style="top:762.75px;font-size:13.5px;color:#1b1b1b;right:571.80px;transform-origin:100% 50%;">26,824</span>
<span class="t" id="t120" style="top:762.75px;font-size:13.5px;color:#1b1b1b;right:497.00px;transform-origin:100% 50%;">92,732</span>
<span class="t" id="t121" style="top:784.75px;font-size:13.5px;color:#1b1b1b;left:552.40px;transform-origin:0 50%;transform:scaleX(0.9633);">Taskmgr.exe</span>
<span class="t" id="t122" style="top:784.75px;font-size:13.5px;color:#1b1b1b;left:783.00px;transform-origin:0 50%;">12032</span>
<span class="t" id="t123" style="top:784.75px;font-size:13.5px;color:#1b1b1b;right:794.00px;transform-origin:100% 50%;">0</span>
<span class="t" id="t124" style="top:784.75px;font-size:13.5px;color:#1b1b1b;right:720.00px;transform-origin:100% 50%;">106,748</span>
<span class="t" id="t125" style="top:784.75px;font-size:13.5px;color:#1b1b1b;right:646.00px;transform-origin:100% 50%;">182,928</span>
<span class="t" id="t126" style="top:784.75px;font-size:13.5px;color:#1b1b1b;right:571.80px;transform-origin:100% 50%;">94,480</span>
<span class="t" id="t127" style="top:784.75px;font-size:13.5px;color:#1b1b1b;right:497.00px;transform-origin:100% 50%;">88,448</span>
<div style="left:0;top:0;width:1700px;height:812px;overflow:hidden;pointer-events:none"><span class="t" id="t128" style="top:806.75px;font-size:13.5px;color:#1b1b1b;left:552.40px;transform-origin:0 50%;transform:scaleX(0.9613);">brave.exe</span>
<span class="t" id="t129" style="top:806.75px;font-size:13.5px;color:#1b1b1b;left:783.00px;transform-origin:0 50%;">10688</span>
<span class="t" id="t130" style="top:806.75px;font-size:13.5px;color:#1b1b1b;right:794.00px;transform-origin:100% 50%;">0</span>
<span class="t" id="t131" style="top:806.75px;font-size:13.5px;color:#1b1b1b;right:720.00px;transform-origin:100% 50%;">96,184</span>
<span class="t" id="t132" style="top:806.75px;font-size:13.5px;color:#1b1b1b;right:646.00px;transform-origin:100% 50%;">166,092</span>
<span class="t" id="t133" style="top:806.75px;font-size:13.5px;color:#1b1b1b;right:571.80px;transform-origin:100% 50%;">79,760</span>
<span class="t" id="t134" style="top:806.75px;font-size:13.5px;color:#1b1b1b;right:497.00px;transform-origin:100% 50%;">86,332</span>
</div>
<svg style="left:1242px;top:403px" width="14" height="10" viewBox="0 0 14 10"><path d="M0.4 9.2 L6.8 0.8 L13.2 9.2Z" fill="#adadad"/></svg>
<svg style="left:1242px;top:1035px" width="14" height="10" viewBox="0 0 14 10"><path d="M0.4 0.8 L6.8 9.2 L13.2 0.8Z" fill="#adadad"/></svg>
<div style="left:1266.6px;top:397.8px;width:256.6px;height:660px;background:#fff;border:1.5px solid #858585;border-bottom:none;height:652.2px;"></div>
<div style="left:1268.1px;top:399.3px;width:253.6px;height:37.3px;background:linear-gradient(#eeeeee 0%,#f2f2f2 8%,#efefef 22%,#e1e1e1 46%,#cfcfcf 70%,#bfbfbf 87%,#adadad 96%,#a0a0a0 100%);border-bottom:1px solid #8e8e8e;box-shadow:inset 0 1px 0 rgba(170,170,170,.55);"></div>
<svg style="left:1280px;top:404px" width="26" height="26" viewBox="-13 -13 26 26">
<defs><linearGradient id="cbr" x1="0" y1="0" x2="0" y2="1"><stop offset="0" stop-color="#ffffff"/><stop offset=".5" stop-color="#f0f0f0"/><stop offset="1" stop-color="#c2c2c2"/></linearGradient></defs>
<circle r="11.4" fill="url(#cbr)" stroke="#939393" stroke-width="1"/>
<path d="M-2.2 -4.6 L2.6 0 L-2.2 4.6" fill="none" stroke="#1a1a1a" stroke-width="2.2"/></svg>
<div style="left:1394.5px;top:403px;width:110.5px;height:30px;background:#fdfdfd;border-radius:2px;"></div>
<span class="t" id="t135" style="top:412.00px;font-size:14px;color:#1b1b1b;left:1422.40px;transform-origin:0 50%;transform:scaleX(0.9597);">Views</span>
<div style="left:1486.5px;top:406px;width:1.3px;height:23px;background:#4a4a4a;"></div>
<svg style="left:1489px;top:414px" width="14" height="9" viewBox="0 0 14 9"><path d="M1 1.4 H12.4 L6.7 7.8Z" fill="#111"/></svg>
<div style="left:1533px;top:418px;width:5px;height:519px;background:#9b9b9b;border-radius:2.5px;"></div>
<span class="t" id="t136" style="top:446.75px;font-size:13.5px;color:#1b1b1b;left:1284.00px;transform-origin:0 50%;transform:scaleX(0.9048);">CPU</span>
<span class="t" id="t137" style="top:446.75px;font-size:13.5px;color:#1b1b1b;right:204.00px;transform-origin:100% 50%;transform:scaleX(0.9701);">100%</span>
<svg style="left:1281.5px;top:466.2px" width="218.1" height="129.8" viewBox="0 0 218.1 129.8">
<rect x="0" y="0" width="218.1" height="129.8" fill="#000"/>
<polygon points="133.5,129.4 136.2,116.2 140.5,114.8 144.1,113.5 146.0,117.8 147.7,122.4 152.1,126.3 162.7,126.3 165.0,120.8 167.1,114.4 169.0,119.8 170.7,124.1 174.2,123.8 178.5,117.8 183.1,112.1 186.5,117.1 190.1,115.3 193.7,117.1 198.1,116.8 200.5,121.3 202.5,125.5 209.5,126.3 217.5,124.1 218.1,129.8 133.5,129.8" fill="#0a6a0c"/>
<g stroke="#0b9214" stroke-width="1.35" fill="none"><path d="M10.10 0 V129.8"/><path d="M29.29 0 V129.8"/><path d="M48.48 0 V129.8"/><path d="M67.67 0 V129.8"/><path d="M86.86 0 V129.8"/><path d="M106.05 0 V129.8"/><path d="M125.24 0 V129.8"/><path d="M144.43 0 V129.8"/><path d="M163.62 0 V129.8"/><path d="M182.81 0 V129.8"/><path d="M202.00 0 V129.8"/><path d="M0 14.00 H218.0999999999999"/><path d="M0 26.84 H218.0999999999999"/><path d="M0 39.68 H218.0999999999999"/><path d="M0 52.52 H218.0999999999999"/><path d="M0 65.36 H218.0999999999999"/><path d="M0 78.20 H218.0999999999999"/><path d="M0 91.04 H218.0999999999999"/><path d="M0 103.88 H218.0999999999999"/><path d="M0 116.72 H218.0999999999999"/></g>
<polyline points="133.5,129.4 136.2,116.2 140.5,114.8 144.1,113.5 146.0,117.8 147.7,122.4 152.1,126.3 162.7,126.3 165.0,120.8 167.1,114.4 169.0,119.8 170.7,124.1 174.2,123.8 178.5,117.8 183.1,112.1 186.5,117.1 190.1,115.3 193.7,117.1 198.1,116.8 200.5,121.3 202.5,125.5 209.5,126.3 217.5,124.1" fill="none" stroke="#2de02f" stroke-width="1.5" stroke-linejoin="round"/><polyline points="133.5,129.4 134.4,86.8 135.3,44.5 136.7,3.4 144.1,3.4 145.9,14.5 148.5,39.2 151.0,43.8 153.9,46.3 156.5,44.8 159.2,41.0 161.5,40.3 163.5,41.8 167.1,41.0 169.0,48.8 171.2,61.3 173.1,45.8 175.1,26.8 179.5,9.2 182.0,4.3 183.9,3.4 186.5,5.6 188.5,15.8 190.7,28.6 192.5,15.8 194.5,3.4 198.1,3.4 199.5,13.8 201.5,30.4 204.0,35.8 206.0,40.1 209.2,36.6 211.5,48.8 213.5,61.3 215.5,53.8 217.5,48.1" fill="none" stroke="#4676ee" stroke-width="2.3" stroke-linejoin="round"/>
<path d="M1 129.8 V1 H217.6" fill="none" stroke="#7a7a7a" stroke-width="2"/>
<path d="M0 129.3 H218.1" stroke="#d9d9d9" stroke-width="1"/><path d="M217.6 0 V129.8" stroke="#d9d9d9" stroke-width="1"/>
</svg>
<svg style="left:1501px;top:449.9px" width="11" height="163.3" viewBox="0 0 11 163.3"><path d="M1.6 2 H8.6 V161.3 H1.6" fill="none" stroke="#2a2a2a" stroke-width="1.3"/></svg>
<span class="t" id="t138" style="top:602.75px;font-size:13.5px;color:#1b1b1b;left:1284.00px;transform-origin:0 50%;transform:scaleX(1.0237);">60 Seconds</span>
<span class="t" id="t139" style="top:602.75px;font-size:13.5px;color:#1b1b1b;right:204.00px;transform-origin:100% 50%;">0%</span>
<span class="t" id="t140" style="top:625.75px;font-size:13.5px;color:#1b1b1b;left:1284.00px;transform-origin:0 50%;transform:scaleX(1.0514);">Disk</span>
<span class="t" id="t141" style="top:625.75px;font-size:13.5px;color:#1b1b1b;right:204.00px;transform-origin:100% 50%;transform:scaleX(1.0554);">1 MB/sec</span>
<svg style="left:1281.5px;top:645.4px" width="218.1" height="130.2" viewBox="0 0 218.1 130.2">
<rect x="0" y="0" width="218.1" height="130.2" fill="#000"/>
<polygon points="133.2,129.6 134.9,76.6 136.7,22.6 138.8,76.6 141.0,129.6 144.5,129.6 148.5,125.2 153.0,129.6 162.7,129.6 163.2,1.4 174.2,1.4 175.1,86.3 177.1,44.6 179.2,1.4 181.1,44.6 183.0,74.0 186.5,89.9 190.7,64.2 194.2,111.1 196.5,54.6 198.5,1.4 200.5,44.6 202.5,75.6 206.0,28.8 208.2,74.6 210.5,119.9 214.9,127.9 217.5,129.6 217.5,130.2 133.2,130.2" fill="#0a7a10"/>
<g stroke="#0b9214" stroke-width="1.35" fill="none"><path d="M10.10 0 V130.20000000000005"/><path d="M29.29 0 V130.20000000000005"/><path d="M48.48 0 V130.20000000000005"/><path d="M67.67 0 V130.20000000000005"/><path d="M86.86 0 V130.20000000000005"/><path d="M106.05 0 V130.20000000000005"/><path d="M125.24 0 V130.20000000000005"/><path d="M144.43 0 V130.20000000000005"/><path d="M163.62 0 V130.20000000000005"/><path d="M182.81 0 V130.20000000000005"/><path d="M202.00 0 V130.20000000000005"/><path d="M0 14.00 H218.0999999999999"/><path d="M0 26.84 H218.0999999999999"/><path d="M0 39.68 H218.0999999999999"/><path d="M0 52.52 H218.0999999999999"/><path d="M0 65.36 H218.0999999999999"/><path d="M0 78.20 H218.0999999999999"/><path d="M0 91.04 H218.0999999999999"/><path d="M0 103.88 H218.0999999999999"/><path d="M0 116.72 H218.0999999999999"/></g>
<polyline points="133.2,129.6 134.9,76.6 136.7,22.6 138.8,76.6 141.0,129.6 144.5,129.6 148.5,125.2 153.0,129.6 162.7,129.6 163.2,1.4 174.2,1.4 175.1,86.3 177.1,44.6 179.2,1.4 181.1,44.6 183.0,74.0 186.5,89.9 190.7,64.2 194.2,111.1 196.5,54.6 198.5,1.4 200.5,44.6 202.5,75.6 206.0,28.8 208.2,74.6 210.5,119.9 214.9,127.9 217.5,129.6" fill="none" stroke="#33ea35" stroke-width="1.3" stroke-linejoin="round"/><polyline points="135.5,129.6 158.5,129.2 162.5,128.1 166.5,126.4 170.5,128.6 180.5,129.1 184.5,127.6 188.5,127.6 192.5,129.2 217.5,129.2" fill="none" stroke="#4676ee" stroke-width="2"/>
<path d="M1 130.20000000000005 V1 H217.6" fill="none" stroke="#7a7a7a" stroke-width="2"/>
<path d="M0 129.7 H218.1" stroke="#d9d9d9" stroke-width="1"/><path d="M217.6 0 V130.2" stroke="#d9d9d9" stroke-width="1"/>
</svg>
<svg style="left:1501px;top:629.1px" width="11" height="163.7" viewBox="0 0 11 163.7"><path d="M1.6 2 H8.6 V161.7 H1.6" fill="none" stroke="#2a2a2a" stroke-width="1.3"/></svg>
<span class="t" id="t142" style="top:782.75px;font-size:13.5px;color:#1b1b1b;right:204.00px;transform-origin:100% 50%;">0</span>
<span class="t" id="t143" style="top:805.75px;font-size:13.5px;color:#1b1b1b;left:1284.00px;transform-origin:0 50%;transform:scaleX(1.1168);">Network</span>
<span class="t" id="t144" style="top:805.75px;font-size:13.5px;color:#1b1b1b;right:204.00px;transform-origin:100% 50%;transform:scaleX(1.0293);">10 Kbps</span>
<svg style="left:1281.5px;top:825px" width="218.1" height="130.0" viewBox="0 0 218.1 130.0">
<rect x="0" y="0" width="218.1" height="130.0" fill="#000"/>
<polygon points="132.5,129.0 136.7,110.6 140.5,129.0 144.1,128.3 148.5,121.7 152.1,121.2 156.0,105.3 159.7,126.5 163.5,116.8 167.1,106.5 171.5,124.8 175.1,126.0 179.2,114.0 183.0,126.5 186.5,129.0 206.0,129.0 209.5,123.9 213.5,60.2 216.5,106.0 217.5,129.0 217.5,130.0 132.5,130.0" fill="#0a7a10"/>
<g stroke="#0b9214" stroke-width="1.35" fill="none"><path d="M10.10 0 V130"/><path d="M29.29 0 V130"/><path d="M48.48 0 V130"/><path d="M67.67 0 V130"/><path d="M86.86 0 V130"/><path d="M106.05 0 V130"/><path d="M125.24 0 V130"/><path d="M144.43 0 V130"/><path d="M163.62 0 V130"/><path d="M182.81 0 V130"/><path d="M202.00 0 V130"/><path d="M0 14.00 H218.0999999999999"/><path d="M0 26.84 H218.0999999999999"/><path d="M0 39.68 H218.0999999999999"/><path d="M0 52.52 H218.0999999999999"/><path d="M0 65.36 H218.0999999999999"/><path d="M0 78.20 H218.0999999999999"/><path d="M0 91.04 H218.0999999999999"/><path d="M0 103.88 H218.0999999999999"/><path d="M0 116.72 H218.0999999999999"/></g>
<polyline points="132.5,129.0 136.7,110.6 140.5,129.0 144.1,128.3 148.5,121.7 152.1,121.2 156.0,105.3 159.7,126.5 163.5,116.8 167.1,106.5 171.5,124.8 175.1,126.0 179.2,114.0 183.0,126.5 186.5,129.0 206.0,129.0 209.5,123.9 213.5,60.2 216.5,106.0 217.5,129.0" fill="none" stroke="#33ea35" stroke-width="1.4" stroke-linejoin="round"/>
<path d="M1 130 V1 H217.6" fill="none" stroke="#7a7a7a" stroke-width="2"/>
<path d="M0 129.5 H218.1" stroke="#d9d9d9" stroke-width="1"/><path d="M217.6 0 V130.0" stroke="#d9d9d9" stroke-width="1"/>
</svg>
<svg style="left:1501px;top:808.7px" width="11" height="163.5" viewBox="0 0 11 163.5"><path d="M1.6 2 H8.6 V161.5 H1.6" fill="none" stroke="#2a2a2a" stroke-width="1.3"/></svg>
<span class="t" id="t145" style="top:961.75px;font-size:13.5px;color:#1b1b1b;right:204.00px;transform-origin:100% 50%;">0</span>
<span class="t" id="t146" style="top:984.75px;font-size:13.5px;color:#1b1b1b;left:1284.00px;transform-origin:0 50%;transform:scaleX(1.1278);">Memory</span>
<span class="t" id="t147" style="top:984.75px;font-size:13.5px;color:#1b1b1b;right:204.00px;transform-origin:100% 50%;transform:scaleX(1.0545);">100 Hard Faults/sec</span>
<svg style="left:1281.5px;top:1004.4px" width="218.1" height="45.6" viewBox="0 0 218.1 45.6">
<rect x="0" y="0" width="218.1" height="130.2" fill="#000"/>
<rect x="167.9" y="0" width="7.2" height="60" fill="#0f9a16"/>
<g stroke="#0b9214" stroke-width="1.35" fill="none"><path d="M10.10 0 V130.19999999999993"/><path d="M29.29 0 V130.19999999999993"/><path d="M48.48 0 V130.19999999999993"/><path d="M67.67 0 V130.19999999999993"/><path d="M86.86 0 V130.19999999999993"/><path d="M106.05 0 V130.19999999999993"/><path d="M125.24 0 V130.19999999999993"/><path d="M144.43 0 V130.19999999999993"/><path d="M163.62 0 V130.19999999999993"/><path d="M182.81 0 V130.19999999999993"/><path d="M202.00 0 V130.19999999999993"/><path d="M0 14.00 H218.0999999999999"/><path d="M0 26.84 H218.0999999999999"/><path d="M0 39.68 H218.0999999999999"/><path d="M0 52.52 H218.0999999999999"/><path d="M0 65.36 H218.0999999999999"/><path d="M0 78.20 H218.0999999999999"/><path d="M0 91.04 H218.0999999999999"/><path d="M0 103.88 H218.0999999999999"/><path d="M0 116.72 H218.0999999999999"/></g>
<path d="M168.5 0 V60 M174.5 0 V60" stroke="#35ee38" stroke-width="1.4"/><polyline points="136.5,47.6 136.5,34.0 163.5,34.0 168.9,28.0 178.5,28.0 182.5,30.0 190.5,30.2 196.5,33.6 204.5,33.6 209.5,36.2 218.1,36.2" fill="none" stroke="#4676ee" stroke-width="2.2" stroke-linejoin="round"/>
<path d="M1 130.19999999999993 V1 H217.6" fill="none" stroke="#7a7a7a" stroke-width="2"/>
<path d="M0 129.7 H218.1" stroke="#d9d9d9" stroke-width="1"/><path d="M217.6 0 V130.2" stroke="#d9d9d9" stroke-width="1"/>
</svg>
<svg style="left:1501px;top:988.1px" width="11" height="61.9" viewBox="0 0 11 61.9"><path d="M1.6 2 H8.6 V63.9" fill="none" stroke="#2a2a2a" stroke-width="1.3"/></svg>
<svg style="left:0;top:0;pointer-events:none" width="1700" height="1074" viewBox="0 0 1700 1074">
<g fill="#ee4545" stroke="rgba(40,10,10,.35)" stroke-width="1" stroke-linejoin="round">
<path d="M314.4 77.5 L66.4 174.7 L64 168.3 L47.3 187.1 L72.5 189.5 L70 183.2 L316.8 83.7 A3.3 3.3 0 0 0 314.4 77.5Z"/>
<path d="M1521.6 182.3 L1628.1 86.5 L1621.2 83.5 L1645 76.3 L1636.9 99.1 L1633.7 92.7 L1525.4 186.7 A2.9 2.9 0 0 1 1521.6 182.3Z"/>
</g></svg>

</body></html>
